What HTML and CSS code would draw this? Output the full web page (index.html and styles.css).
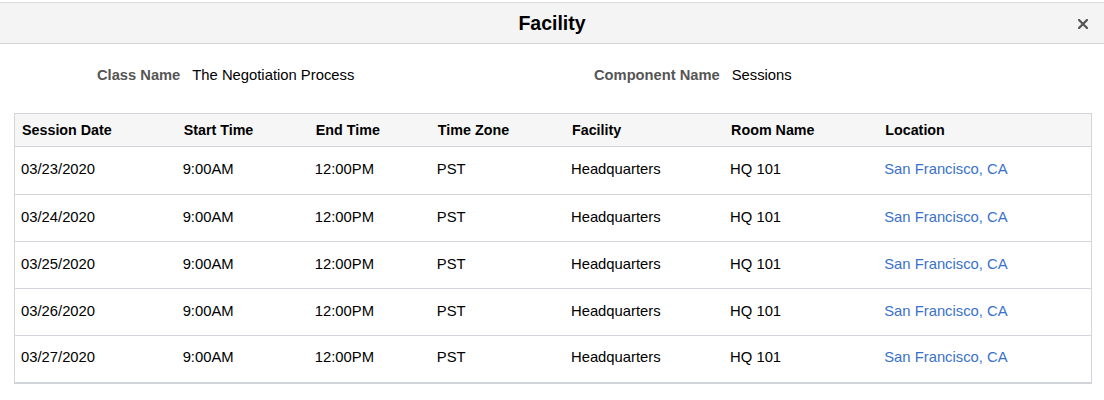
FILE: index.html
```html
<!DOCTYPE html>
<html>
<head>
<meta charset="utf-8">
<link rel="stylesheet" href="styles.css">
</head>
<body>
<div class="page">
  <div class="header">
    <h1 class="title">Facility</h1>
    <span class="close">
      <svg width="10" height="10" viewBox="0 0 10 10"><path d="M1 1L9 9M9 1L1 9" stroke="#555" stroke-width="2.2" stroke-linecap="square"/></svg>
    </span>
  </div>
  <div class="fields">
    <div class="field field-class"><span class="label">Class Name</span><span class="value">The Negotiation Process</span></div>
    <div class="field field-comp"><span class="label">Component Name</span><span class="value">Sessions</span></div>
  </div>
  <div class="table-wrap">
    <table class="grid">
      <colgroup>
        <col style="width:162px"><col style="width:132px"><col style="width:122px"><col style="width:134px"><col style="width:159px"><col style="width:154px"><col style="width:213px">
      </colgroup>
      <thead>
        <tr><th>Session Date</th><th>Start Time</th><th>End Time</th><th>Time Zone</th><th>Facility</th><th>Room Name</th><th>Location</th></tr>
      </thead>
      <tbody>
        <tr class="first"><td>03/23/2020</td><td>9:00AM</td><td>12:00PM</td><td>PST</td><td>Headquarters</td><td>HQ 101</td><td><a class="link" href="#">San Francisco, CA</a></td></tr>
        <tr><td>03/24/2020</td><td>9:00AM</td><td>12:00PM</td><td>PST</td><td>Headquarters</td><td>HQ 101</td><td><a class="link" href="#">San Francisco, CA</a></td></tr>
        <tr><td>03/25/2020</td><td>9:00AM</td><td>12:00PM</td><td>PST</td><td>Headquarters</td><td>HQ 101</td><td><a class="link" href="#">San Francisco, CA</a></td></tr>
        <tr><td>03/26/2020</td><td>9:00AM</td><td>12:00PM</td><td>PST</td><td>Headquarters</td><td>HQ 101</td><td><a class="link" href="#">San Francisco, CA</a></td></tr>
        <tr><td>03/27/2020</td><td>9:00AM</td><td>12:00PM</td><td>PST</td><td>Headquarters</td><td>HQ 101</td><td><a class="link" href="#">San Francisco, CA</a></td></tr>
      </tbody>
    </table>
  </div>
</div>
</body>
</html>
```
FILE: styles.css
```css
html, body { margin: 0; padding: 0; background: #fff; }
body { font-family: "Liberation Sans", Arial, sans-serif; font-size: 14.8px; color: #000; }
.page { padding-top: 2px; }
.header {
  position: relative;
  height: 40px;
  background: #f4f4f4;
  border-top: 1px solid #dcdcdc;
  border-bottom: 1px solid #d4d4d4;
  display: flex;
  align-items: center;
  justify-content: center;
}
.title { margin: 0; font-size: 19.5px; font-weight: bold; color: #000; }
.close { position: absolute; right: 16px; top: 16px; width: 10px; height: 10px; display: block; line-height: 0; }
.fields { display: flex; height: 69px; align-items: flex-start; padding-top: 23px; box-sizing: border-box; }
.field { display: flex; gap: 12px; }
.field-class { margin-left: 97px; width: 497px; }
.label { font-weight: bold; color: #555; font-size: 14.7px; }
.value { color: #000; }
.table-wrap { margin-left: 14px; width: 1078px; }
.grid {
  table-layout: fixed;
  border-collapse: collapse;
  width: 1078px;
  border: 1px solid #d2d6dc;
  border-bottom: 2px solid #d2d6dc;
}
.grid th {
  background: #f6f6f6;
  text-align: left;
  font-weight: bold;
  font-size: 14.3px;
  height: 32px;
  padding: 0 7px 0 7px;
  border-bottom: 1px solid #d2d6dc;
  vertical-align: middle;
}
.grid td {
  height: 47px;
  padding: 0 7px 3px 6px;
  box-sizing: border-box;
  border-bottom: 1px solid #d2d6dc;
  vertical-align: middle;
}
.grid tr.first td { height: 48px; }
.grid tbody tr:last-child td { border-bottom: none; }
.link { color: #3a72c9; text-decoration: none; }
```
